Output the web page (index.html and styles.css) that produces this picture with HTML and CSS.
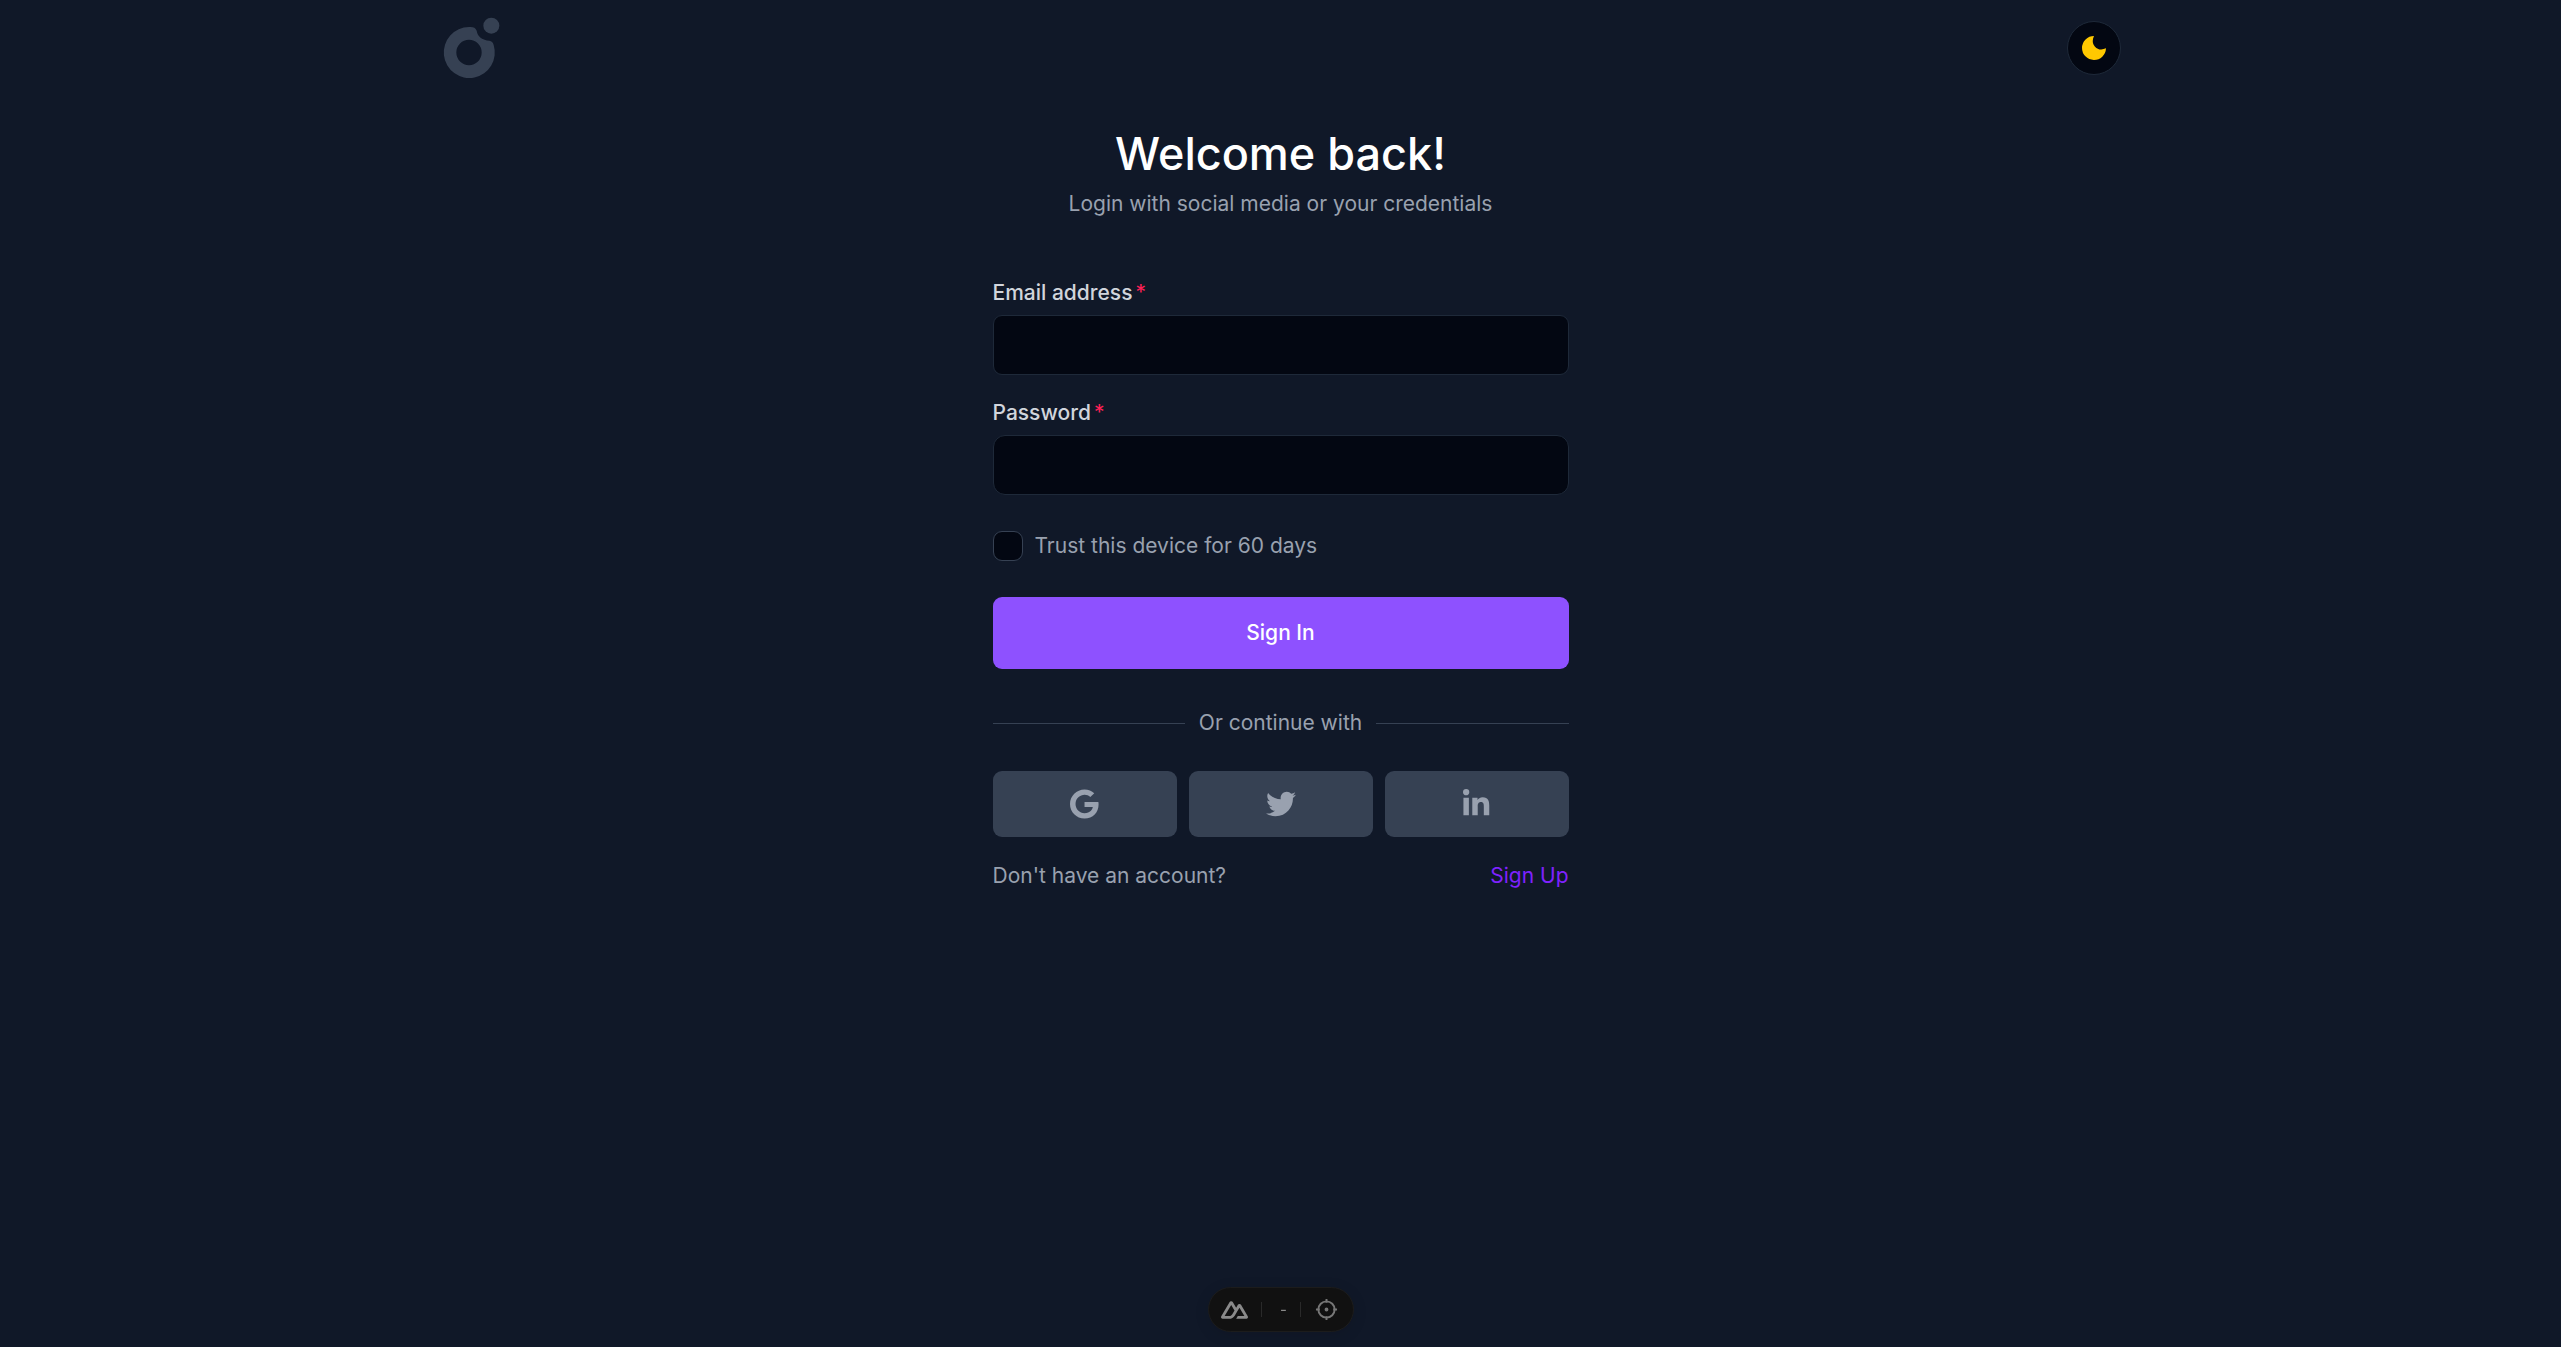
FILE: index.html
```html
<!DOCTYPE html>
<html lang="en">
<head>
<meta charset="utf-8">
<meta name="viewport" content="width=device-width, initial-scale=1">
<title>Sign In</title>
<link rel="stylesheet" href="styles.css">
</head>
<body>
<header class="header">
  <a class="logo" href="#" aria-label="Home">
    <svg viewBox="2 0 180 180" fill="currentColor" aria-hidden="true"><path fill-rule="evenodd" d="M86 27C99 26 105 29 109 38C112 57 127 66 147 68Q157 69 160 81A76.500 76.500 0 1 1 86 27ZM86 65.500a38 38 0 1 0 0 76a38 38 0 1 0 0-76Z"/><circle cx="153" cy="23" r="24"/></svg>
  </a>
  <button class="theme-toggle" type="button" aria-label="Toggle theme">
    <svg viewBox="0 0 72 72" fill="currentColor" aria-hidden="true"><path d="M36 0C31 10 30 23 39 32C47 41 59 43 72 37A36 36 0 1 1 36 0Z"/></svg>
  </button>
</header>
<main class="login">
  <h1 class="title">Welcome back!</h1>
  <p class="subtitle">Login with social media or your credentials</p>
  <form class="form">
    <div class="field">
      <label for="email">Email address<span class="required">*</span></label>
      <input class="input" id="email" type="email" required>
    </div>
    <div class="field">
      <label for="password">Password<span class="required">*</span></label>
      <input class="input input-password" id="password" type="password" required>
    </div>
    <div class="trust">
      <input class="checkbox" id="trust" type="checkbox">
      <label for="trust">Trust this device for 60 days</label>
    </div>
    <button class="submit" type="submit">Sign In</button>
  </form>
  <div class="divider"><span>Or continue with</span></div>
  <div class="social">
    <button type="button" aria-label="Google"><svg viewBox="0 0 488 512" fill="currentColor"><path d="M488 261.800C488 403.300 391.100 504 248 504 110.800 504 0 393.200 0 256S110.800 8 248 8c66.800 0 123 24.500 166.300 64.900l-67.500 64.900C258.500 52.600 94.300 116.600 94.300 256c0 86.500 69.100 156.600 153.700 156.600 98.200 0 135-70.400 140.800-106.900H248v-85.300h236.100c2.300 12.700 3.900 24.900 3.900 41.400z"/></svg></button>
    <button type="button" aria-label="Twitter"><svg viewBox="0 0 512 512" fill="currentColor"><path d="M459.370 151.716c.325 4.548.325 9.097.325 13.645 0 138.720-105.583 298.558-298.558 298.558-59.452 0-114.680-17.219-161.137-47.106 8.447.974 16.568 1.299 25.340 1.299 49.055 0 94.213-16.568 130.274-44.832-46.132-.975-84.792-31.188-98.112-72.772 6.498.974 12.995 1.624 19.818 1.624 9.421 0 18.843-1.300 27.614-3.573-48.081-9.747-84.143-51.980-84.143-102.985v-1.299c13.969 7.797 30.214 12.670 47.431 13.319-28.264-18.843-46.781-51.005-46.781-87.391 0-19.492 5.197-37.360 14.294-52.954 51.655 63.675 129.300 105.258 216.365 109.807-1.624-7.797-2.599-15.918-2.599-24.040 0-57.828 46.782-104.934 104.934-104.934 30.213 0 57.502 12.670 76.670 33.137 23.715-4.548 46.456-13.320 66.599-25.340-7.798 24.366-24.366 44.833-46.132 57.827 21.117-2.273 41.584-8.122 60.426-16.243-14.292 20.791-32.161 39.308-52.628 54.253z"/></svg></button>
    <button type="button" aria-label="LinkedIn"><svg viewBox="0 0 448 512" fill="currentColor"><path d="M100.280 448H7.400V148.900h92.880zM53.790 108.100C24.090 108.100 0 83.500 0 53.800a53.790 53.790 0 0 1 107.580 0c0 29.700-24.100 54.300-53.790 54.300zM447.900 448h-92.680V302.400c0-34.700-.7-79.200-48.290-79.200-48.290 0-55.690 37.700-55.690 76.700V448h-92.780V148.900h89.080v40.800h1.300c12.400-23.500 42.690-48.300 87.880-48.300 94 0 111.280 61.900 111.280 142.300V448z"/></svg></button>
  </div>
  <p class="signup"><span>Don't have an account?</span><a href="#">Sign Up</a></p>
</main>
<aside class="devtools" aria-label="Developer tools">
  <button type="button" aria-label="Nuxt"><svg class="nuxt" viewBox="0 4 24 16" fill="currentColor"><path d="M13.4642 19.8295h8.9218c.2834 0 .5618-.0723.8072-.2098a1.5899 1.5899 0 0 0 .5908-.5732 1.5293 1.5293 0 0 0 .216-.783 1.529 1.529 0 0 0-.2167-.7828L17.7916 7.4142a1.59 1.59 0 0 0-.5907-.573 1.6524 1.6524 0 0 0-.807-.2099c-.2833 0-.5616.0724-.807.2098a1.59 1.59 0 0 0-.5907.5731L13.4642 9.99l-2.9954-5.0366a1.5913 1.5913 0 0 0-.591-.573 1.6533 1.6533 0 0 0-.8071-.2098c-.2834 0-.5617.0723-.8072.2097a1.5913 1.5913 0 0 0-.591.573L.2168 17.4808A1.5292 1.5292 0 0 0 0 18.2635c-.0001.2749.0744.545.216.783a1.59 1.59 0 0 0 .5908.5732c.2454.1375.5238.2098.8072.2098h5.6003c2.219 0 3.8554-.9454 4.9813-2.7899l2.7337-4.5922L16.3935 9.99l4.3944 7.382h-5.8586ZM7.123 17.3694l-3.9083-.0009 5.8586-9.8421 2.9232 4.921-1.9572 3.2892c-.7478 1.1967-1.5972 1.6328-2.9163 1.6328z"/></svg></button>
  <span class="timing">-</span>
  <button type="button" aria-label="Inspect"><svg class="target" viewBox="0 0 24 24" fill="none" stroke="currentColor" stroke-width="2"><circle cx="12" cy="12" r="8.500"/><path d="M12 1v4M12 19v4M1 12h4M19 12h4"/><circle cx="12" cy="12" r="1" fill="currentColor"/></svg></button>
</aside>
</body>
</html>
```
FILE: styles.css
```css
* { box-sizing: border-box; }

body {
  margin: 0;
  min-height: 100vh;
  background: #101828;
  color: #99a1af;
  font: 400 21px/30px Inter, sans-serif;
}

button, input { font: inherit; }
button { cursor: pointer; }
svg { display: block; }
h1, p { margin: 0; }

.header {
  display: flex;
  align-items: center;
  justify-content: space-between;
  width: 100%;
  max-width: 1728px;
  height: 96px;
  margin: 0 auto;
  padding: 0 24px;
}
.logo { color: #364153; }
.logo svg { width: 60px; height: 60px; overflow: visible; }

.theme-toggle {
  display: flex;
  align-items: center;
  justify-content: center;
  width: 54px;
  height: 54px;
  padding: 0;
  border: 1px solid #1e2939;
  border-radius: 50%;
  background: #030712;
  color: #ffc800;
}
.theme-toggle svg { width: 24px; height: 24px; }

.login {
  max-width: 624px;
  margin: 0 auto;
  padding: 31px 24px;
}
.title {
  color: #fff;
  font-size: 45px;
  font-weight: 500;
  line-height: 54px;
  text-align: center;
}
.subtitle { margin-top: 8px; text-align: center; }

.form { margin-top: 59px; }
.field { display: flex; flex-direction: column; gap: 7px; }
.field + .field { margin-top: 23px; }
.field label { color: #d1d5dc; font-weight: 500; }
.required { margin-left: 3px; color: #ff2056; font-weight: 400; }

.input {
  width: 100%;
  height: 60px;
  padding: 0 16px;
  border: 1px solid #1e2939;
  border-radius: 9px;
  background: #030712;
  color: #fff;
}
.input-password { border-radius: 12px; }

.trust {
  display: flex;
  align-items: center;
  gap: 12px;
  margin: 36px 0;
}
.checkbox {
  appearance: none;
  width: 30px;
  height: 30px;
  margin: 0;
  border: 1px solid #364153;
  border-radius: 9px;
  background: #030712;
}
.checkbox:checked { background: #8e51ff; }

.submit {
  width: 100%;
  height: 72px;
  border: 0;
  border-radius: 9px;
  background: #8e51ff;
  color: #fff;
  font-weight: 500;
}

.divider {
  display: flex;
  align-items: center;
  gap: 14px;
  margin: 39px 0 33px;
}
.divider::before, .divider::after {
  content: "";
  flex: 1;
  height: 1px;
  background: #364153;
}

.social {
  display: grid;
  grid-template-columns: repeat(3, 1fr);
  gap: 12px;
}
.social button {
  display: flex;
  align-items: center;
  justify-content: center;
  height: 66px;
  border: 0;
  border-radius: 9px;
  background: #364153;
  color: #99a1af;
}
.social svg { height: 30px; }

.signup {
  display: flex;
  justify-content: space-between;
  margin-top: 24px;
}
.signup a { color: #7f22fe; text-decoration: none; }

.devtools {
  position: fixed;
  bottom: 15px;
  left: 50%;
  display: flex;
  align-items: center;
  height: 45px;
  border: 1px solid #1c1c1c;
  border-radius: 23px;
  background: #111;
  box-shadow: 0 3px 15px rgba(0, 0, 0, .1);
  color: #8a8a8a;
  transform: translateX(-50%);
}
.devtools button {
  display: flex;
  align-items: center;
  justify-content: center;
  width: 52px;
  height: 43px;
  padding: 0;
  border: 0;
  background: none;
  color: inherit;
}
.nuxt { width: 27px; height: 18px; }
.target { width: 23px; height: 23px; color: #777; }
.timing {
  width: 40px;
  padding-left: 6px;
  border: solid #2a2a2a;
  border-width: 0 1px;
  font-size: 15px;
  line-height: 15px;
  text-align: center;
}
```
